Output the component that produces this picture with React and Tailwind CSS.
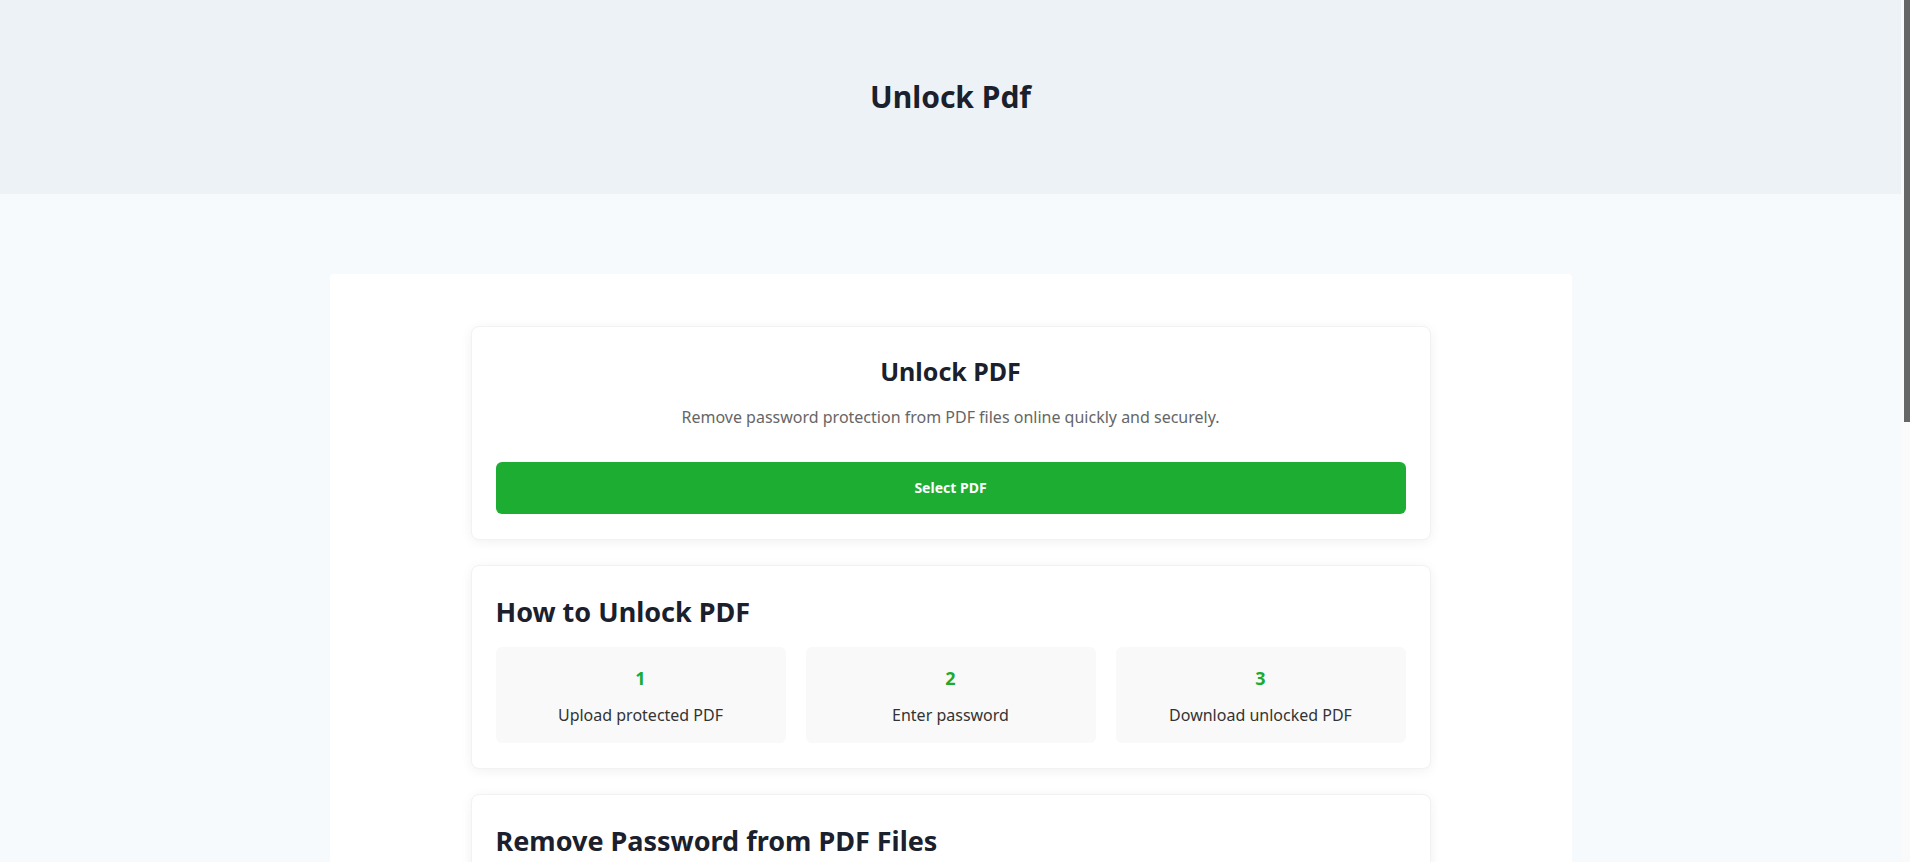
import React from "react";

const steps = [
  { n: "1", label: "Upload protected PDF" },
  { n: "2", label: "Enter password" },
  { n: "3", label: "Download unlocked PDF" },
];

const faqs = [
  {
    q: "Is it safe to unlock PDF files online?",
    a: "Yes. Files are processed securely and removed from the server automatically after a short time.",
  },
  {
    q: "Do I need the original password?",
    a: "Yes. You must know the password to remove the protection from the PDF document.",
  },
  {
    q: "Does unlocking change the quality of my PDF?",
    a: "No. The content, layout and images of your document stay exactly the same.",
  },
];

const Card = ({ children, className = "" }) => (
  <div className={`bg-white rounded-lg border border-[#f2f2f2] shadow-[0_2px_12px_rgba(0,0,0,0.06)] px-6 pb-[25px] pt-6 ${className}`}>
    {children}
  </div>
);

const App = () => {
  return (
    <div className="h-screen flex bg-[#f7fafc] text-[#1a202c] font-['Segoe_UI','Noto_Sans',sans-serif]">
      <div className="flex-1 min-w-0 overflow-y-auto [scrollbar-width:none]">
        {/* top band */}
        <header className="h-[194px] bg-[#edf2f7] flex items-center justify-center">
          <h1 className="text-[30px] leading-10 font-bold">Unlock Pdf</h1>
        </header>

        <main className="pt-20 pb-16">
          <div className="w-[1242px] mx-auto bg-white rounded pt-[52px] pb-14">
            <div className="max-w-[960px] mx-auto flex flex-col gap-[25px]">
              {/* tool card */}
              <Card className="text-center">
                <h2 className="text-[25px] leading-10 font-bold">Unlock PDF</h2>
                <p className="mt-[14px] text-base leading-6 text-[#666666]">
                  Remove password protection from PDF files online quickly and securely.
                </p>
                <button className="mt-[33px] w-full h-[52px] rounded-md bg-[#1cad32] text-white text-sm font-bold">
                  Select PDF
                </button>
              </Card>

              {/* steps */}
              <Card>
                <h2 className="text-[27px] leading-[44px] font-bold">How to Unlock PDF</h2>
                <div className="mt-[13px] grid grid-cols-3 gap-5">
                  {steps.map((s) => (
                    <div key={s.n} className="bg-[#f9f9f9] rounded-md pt-[17px] pb-4 text-center">
                      <div className="text-lg leading-7 font-bold text-[#1aab2f]">{s.n}</div>
                      <div className="mt-[11px] text-base leading-6 text-[#333333]">{s.label}</div>
                    </div>
                  ))}
                </div>
              </Card>

              {/* article */}
              <Card>
                <h2 className="text-[27px] leading-[44px] font-bold">Remove Password from PDF Files</h2>
                <p className="mt-3 text-base leading-7 text-[#4a4a4a]">
                  Password-protected PDFs are great for keeping documents private, but typing the password every time you open a file
                  quickly gets tiresome. With this tool you can remove the open password from any PDF you own in a few seconds, right
                  from your browser, without installing any software.
                </p>
                <p className="mt-4 text-base leading-7 text-[#4a4a4a]">
                  Simply upload the protected document, enter the current password and download an unlocked copy that can be opened,
                  printed, copied and edited freely on any device.
                </p>
              </Card>

              <Card>
                <h2 className="text-[27px] leading-[44px] font-bold">Why Use Our PDF Unlocker?</h2>
                <ul className="mt-3 list-disc pl-6 text-base leading-8 text-[#4a4a4a]">
                  <li>Free to use with no registration required</li>
                  <li>Works on Windows, Mac, Linux, Android and iOS</li>
                  <li>Secure processing, files are deleted automatically</li>
                  <li>Keeps the original quality and formatting of your PDF</li>
                </ul>
              </Card>

              <Card>
                <h2 className="text-[27px] leading-[44px] font-bold">Frequently Asked Questions</h2>
                <div className="mt-3 flex flex-col gap-4">
                  {faqs.map((f) => (
                    <div key={f.q}>
                      <h3 className="text-lg leading-7 font-semibold">{f.q}</h3>
                      <p className="mt-1 text-base leading-7 text-[#4a4a4a]">{f.a}</p>
                    </div>
                  ))}
                </div>
              </Card>
            </div>
          </div>
        </main>
      </div>

      {/* scrollbar */}
      <div className="w-[9px] bg-[#fafafa] flex justify-end">
        <div className="w-[6px] h-[422px] bg-[#666666]" />
      </div>
    </div>
  );
};

export default App;
